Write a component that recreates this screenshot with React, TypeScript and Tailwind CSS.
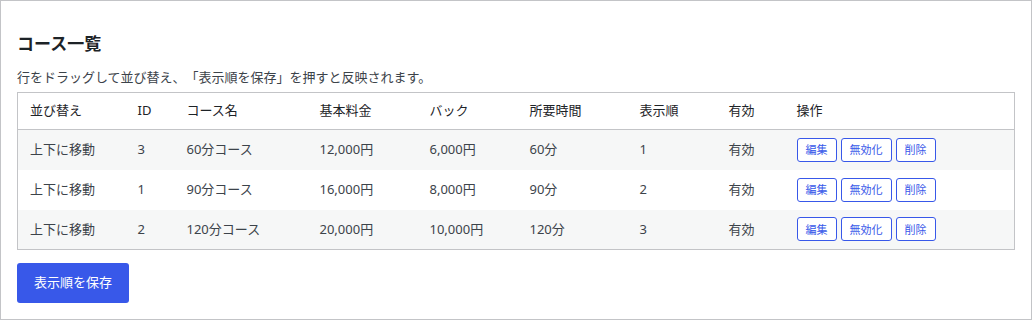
const courses = [
  { id: 3, name: '60分コース', price: '12,000円', back: '6,000円', time: '60分', order: 1 },
  { id: 1, name: '90分コース', price: '16,000円', back: '8,000円', time: '90分', order: 2 },
  { id: 2, name: '120分コース', price: '20,000円', back: '10,000円', time: '120分', order: 3 },
];

const cols = [
  { label: '並び替え', w: 'w-[108px]' },
  { label: 'ID', w: 'w-[49px]' },
  { label: 'コース名', w: 'w-[133px]' },
  { label: '基本料金', w: 'w-[110px]' },
  { label: 'バック', w: 'w-[100px]' },
  { label: '所要時間', w: 'w-[110px]' },
  { label: '表示順', w: 'w-[89px]' },
  { label: '有効', w: 'w-[68px]' },
  { label: '操作', w: '' },
];

function SmallButton({ children, w }: { children: React.ReactNode; w: string }) {
  return (
    <button
      className={`${w} h-6 border border-[#3858e9] rounded-[3px] bg-white text-[11px] leading-none text-[#3858e9] flex items-center justify-center`}
    >
      {children}
    </button>
  );
}

export default function App() {
  return (
    <div
      className="w-[1032px] h-[321px] bg-white [text-spacing-trim:space-all]"
      style={{ fontFamily: '"Noto Sans", "Noto Sans CJK JP", sans-serif' }}
    >
      <div className="h-[320px] border border-[#c3c4c7] px-4 pb-4 flex flex-col">
        <h2 className="mt-[31px] text-[17px] leading-6 font-bold text-[#1d2327]">コース一覧</h2>
        <p className="mt-[11px] text-[13px] leading-5 text-[#3c434a]">
          行をドラッグして並び替え、「表示順を保存」を押すと反映されます。
        </p>

        <table className="mt-[5px] w-full border border-[#c3c4c7] border-collapse text-[13px] text-[#2c3338] table-fixed">
          <thead>
            <tr className="h-[37px] border-b border-[#c3c4c7]">
              {cols.map((c) => (
                <th key={c.label} className={`${c.w} px-3 text-left font-normal text-[#1d2327]`}>
                  {c.label}
                </th>
              ))}
            </tr>
          </thead>
          <tbody>
            {courses.map((c, i) => (
              <tr key={c.id} className={`h-10 ${i % 2 === 0 ? 'bg-[#f6f7f7]' : 'bg-white'}`}>
                <td className="px-3 text-[#3c434a]">上下に移動</td>
                <td className="px-3 text-[#3c434a]">{c.id}</td>
                <td className="px-3 text-[#3c434a]">{c.name}</td>
                <td className="px-3 text-[#3c434a]">{c.price}</td>
                <td className="px-3 text-[#3c434a]">{c.back}</td>
                <td className="px-3 text-[#3c434a]">{c.time}</td>
                <td className="px-3 text-[#3c434a]">{c.order}</td>
                <td className="px-3 text-[#3c434a]">有効</td>
                <td className="px-3">
                  <div className="flex gap-1">
                    <SmallButton w="w-10">編集</SmallButton>
                    <SmallButton w="w-[51px]">無効化</SmallButton>
                    <SmallButton w="w-10">削除</SmallButton>
                  </div>
                </td>
              </tr>
            ))}
          </tbody>
        </table>

        <div className="mt-[13px]">
          <button className="h-10 w-28 rounded-[3px] bg-[#3858e9] text-[13px] text-white">
            表示順を保存
          </button>
        </div>
      </div>
    </div>
  );
}
